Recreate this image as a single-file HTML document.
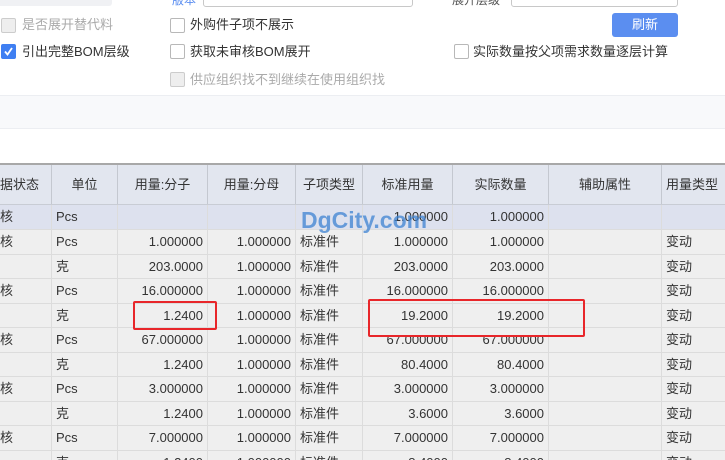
<!DOCTYPE html>
<html style="overflow:hidden;height:460px"><head><meta charset="utf-8"><style>
*{margin:0;padding:0;box-sizing:border-box}
body{width:725px;height:460px;overflow:hidden;background:#fff;position:relative;font-family:"Liberation Sans","Noto Sans CJK SC",sans-serif;font-size:13px;color:#333}
.a{position:absolute}
.cb{position:absolute;width:15px;height:15px;border:1px solid #b8b8b8;border-radius:2px;background:#fff}
.cb.dis{background:#eee;border-color:#ccc}
.lb{position:absolute;font-size:13px;line-height:16px;white-space:nowrap}
.row{position:absolute;left:0;width:725px;height:25px;background:#efefef;border-bottom:1px solid #dcdcdc}
.row.s{height:24px}
.c{position:absolute;top:0;height:100%;border-right:1px solid #dcdcdc;line-height:23px;font-size:13px;white-space:nowrap;padding:0 4px}
.r{text-align:right}
</style></head><body>
<div class="a" style="left:0;top:0;width:112px;height:6px;background:#f0f1f4;border-radius:0 0 3px 0"></div>
<div class="a" style="left:172px;top:-9px;font-size:12px;color:#5b8ef0">版本</div>
<div class="a" style="left:203px;top:-4px;width:210px;height:11px;border:1px solid #c8c8c8;border-radius:3px"></div>
<div class="a" style="left:452px;top:-9px;font-size:12px;color:#555">展开层级</div>
<div class="a" style="left:511px;top:-4px;width:167px;height:11px;border:1px solid #c8c8c8;border-radius:3px"></div>
<div class="a" style="left:612px;top:13px;width:66px;height:24px;background:#5b8ef0;border-radius:3px;color:#fff;text-align:center;line-height:24px;font-size:13px">刷新</div>

<div class="cb dis" style="left:1px;top:18px"></div><div class="lb" style="left:22px;top:17px;color:#aaa">是否展开替代料</div>
<div class="cb" style="left:170px;top:18px"></div><div class="lb" style="left:190px;top:17px">外购件子项不展示</div>
<div class="cb" style="left:1px;top:44px;background:#3f7ff2;border-color:#3f7ff2"><svg width="13" height="13" viewBox="0 0 13 13" style="position:absolute;left:0;top:0"><path d="M3 6.5l2.5 3L10 3" stroke="#fff" stroke-width="1.8" fill="none"/></svg></div><div class="lb" style="left:22px;top:44px">引出完整BOM层级</div>
<div class="cb" style="left:170px;top:44px"></div><div class="lb" style="left:190px;top:44px">获取未审核BOM展开</div>
<div class="cb" style="left:454px;top:44px"></div><div class="lb" style="left:473px;top:44px">实际数量按父项需求数量逐层计算</div>
<div class="cb dis" style="left:170px;top:72px"></div><div class="lb" style="left:190px;top:72px;color:#aaa">供应组织找不到继续在使用组织找</div>

<div class="a" style="left:0;top:95px;width:725px;height:34px;background:#f8f9fb;border-top:1px solid #eceef2;border-bottom:1px solid #eceef2"></div>
<div class="a" style="left:0;top:163px;width:725px;height:2px;background:#a8a8a8"></div>

<div class="a" style="left:0;top:165px;width:725px;height:40px;background:#e2e6ef;border-bottom:1px solid #c8ccd4">
<div class="c" style="left:-4px;width:56px;line-height:40px;border-color:#c4c8d0">据状态</div>
<div class="c" style="left:52px;width:66px;line-height:40px;text-align:center;border-color:#c4c8d0">单位</div>
<div class="c" style="left:118px;width:90px;line-height:40px;text-align:center;border-color:#c4c8d0">用量:分子</div>
<div class="c" style="left:208px;width:88px;line-height:40px;text-align:center;border-color:#c4c8d0">用量:分母</div>
<div class="c" style="left:296px;width:67px;line-height:40px;text-align:center;border-color:#c4c8d0">子项类型</div>
<div class="c" style="left:363px;width:90px;line-height:40px;text-align:center;border-color:#c4c8d0">标准用量</div>
<div class="c" style="left:453px;width:96px;line-height:40px;text-align:center;border-color:#c4c8d0">实际数量</div>
<div class="c" style="left:549px;width:113px;line-height:40px;text-align:center;border-color:#c4c8d0">辅助属性</div>
<div class="c" style="left:662px;width:70px;line-height:40px;border-color:#c4c8d0">用量类型</div>
</div>

<div class="row" style="top:205px;background:#dde1ee"><div class="c" style="left:-4px;width:56px">核</div><div class="c" style="left:52px;width:66px">Pcs</div><div class="c" style="left:118px;width:90px"></div><div class="c" style="left:208px;width:88px"></div><div class="c" style="left:296px;width:67px"></div><div class="c r" style="left:363px;width:90px">1.000000</div><div class="c r" style="left:453px;width:96px">1.000000</div><div class="c" style="left:549px;width:113px"></div></div>
<div class="row" style="top:230px"><div class="c" style="left:-4px;width:56px">核</div><div class="c" style="left:52px;width:66px">Pcs</div><div class="c r" style="left:118px;width:90px">1.000000</div><div class="c r" style="left:208px;width:88px">1.000000</div><div class="c" style="left:296px;width:67px">标准件</div><div class="c r" style="left:363px;width:90px">1.000000</div><div class="c r" style="left:453px;width:96px">1.000000</div><div class="c" style="left:549px;width:113px"></div><div class="c" style="left:662px;width:70px">变动</div></div>
<div class="row s" style="top:255px"><div class="c" style="left:-4px;width:56px"></div><div class="c" style="left:52px;width:66px">克</div><div class="c r" style="left:118px;width:90px">203.0000</div><div class="c r" style="left:208px;width:88px">1.000000</div><div class="c" style="left:296px;width:67px">标准件</div><div class="c r" style="left:363px;width:90px">203.0000</div><div class="c r" style="left:453px;width:96px">203.0000</div><div class="c" style="left:549px;width:113px"></div><div class="c" style="left:662px;width:70px">变动</div></div>
<div class="row" style="top:279px"><div class="c" style="left:-4px;width:56px">核</div><div class="c" style="left:52px;width:66px">Pcs</div><div class="c r" style="left:118px;width:90px">16.000000</div><div class="c r" style="left:208px;width:88px">1.000000</div><div class="c" style="left:296px;width:67px">标准件</div><div class="c r" style="left:363px;width:90px">16.000000</div><div class="c r" style="left:453px;width:96px">16.000000</div><div class="c" style="left:549px;width:113px"></div><div class="c" style="left:662px;width:70px">变动</div></div>
<div class="row s" style="top:304px"><div class="c" style="left:-4px;width:56px"></div><div class="c" style="left:52px;width:66px">克</div><div class="c r" style="left:118px;width:90px">1.2400</div><div class="c r" style="left:208px;width:88px">1.000000</div><div class="c" style="left:296px;width:67px">标准件</div><div class="c r" style="left:363px;width:90px">19.2000</div><div class="c r" style="left:453px;width:96px">19.2000</div><div class="c" style="left:549px;width:113px"></div><div class="c" style="left:662px;width:70px">变动</div></div>
<div class="row" style="top:328px"><div class="c" style="left:-4px;width:56px">核</div><div class="c" style="left:52px;width:66px">Pcs</div><div class="c r" style="left:118px;width:90px">67.000000</div><div class="c r" style="left:208px;width:88px">1.000000</div><div class="c" style="left:296px;width:67px">标准件</div><div class="c r" style="left:363px;width:90px">67.000000</div><div class="c r" style="left:453px;width:96px">67.000000</div><div class="c" style="left:549px;width:113px"></div><div class="c" style="left:662px;width:70px">变动</div></div>
<div class="row s" style="top:353px"><div class="c" style="left:-4px;width:56px"></div><div class="c" style="left:52px;width:66px">克</div><div class="c r" style="left:118px;width:90px">1.2400</div><div class="c r" style="left:208px;width:88px">1.000000</div><div class="c" style="left:296px;width:67px">标准件</div><div class="c r" style="left:363px;width:90px">80.4000</div><div class="c r" style="left:453px;width:96px">80.4000</div><div class="c" style="left:549px;width:113px"></div><div class="c" style="left:662px;width:70px">变动</div></div>
<div class="row" style="top:377px"><div class="c" style="left:-4px;width:56px">核</div><div class="c" style="left:52px;width:66px">Pcs</div><div class="c r" style="left:118px;width:90px">3.000000</div><div class="c r" style="left:208px;width:88px">1.000000</div><div class="c" style="left:296px;width:67px">标准件</div><div class="c r" style="left:363px;width:90px">3.000000</div><div class="c r" style="left:453px;width:96px">3.000000</div><div class="c" style="left:549px;width:113px"></div><div class="c" style="left:662px;width:70px">变动</div></div>
<div class="row s" style="top:402px"><div class="c" style="left:-4px;width:56px"></div><div class="c" style="left:52px;width:66px">克</div><div class="c r" style="left:118px;width:90px">1.2400</div><div class="c r" style="left:208px;width:88px">1.000000</div><div class="c" style="left:296px;width:67px">标准件</div><div class="c r" style="left:363px;width:90px">3.6000</div><div class="c r" style="left:453px;width:96px">3.6000</div><div class="c" style="left:549px;width:113px"></div><div class="c" style="left:662px;width:70px">变动</div></div>
<div class="row" style="top:426px"><div class="c" style="left:-4px;width:56px">核</div><div class="c" style="left:52px;width:66px">Pcs</div><div class="c r" style="left:118px;width:90px">7.000000</div><div class="c r" style="left:208px;width:88px">1.000000</div><div class="c" style="left:296px;width:67px">标准件</div><div class="c r" style="left:363px;width:90px">7.000000</div><div class="c r" style="left:453px;width:96px">7.000000</div><div class="c" style="left:549px;width:113px"></div><div class="c" style="left:662px;width:70px">变动</div></div>
<div class="row" style="top:451px;height:9px;border-bottom:none;overflow:hidden"><div class="c" style="left:-4px;width:56px;height:24px"></div><div class="c" style="left:52px;width:66px;height:24px">克</div><div class="c r" style="left:118px;width:90px;height:24px">1.2400</div><div class="c r" style="left:208px;width:88px;height:24px">1.000000</div><div class="c" style="left:296px;width:67px;height:24px">标准件</div><div class="c r" style="left:363px;width:90px;height:24px">8.4000</div><div class="c r" style="left:453px;width:96px;height:24px">8.4000</div><div class="c" style="left:549px;width:113px;height:24px"></div><div class="c" style="left:662px;width:70px;height:24px">变动</div></div>

<div class="a" style="left:301px;top:207px;font-size:23px;font-weight:bold;color:rgba(60,130,210,0.75)">DgCity.com</div>
<div class="a" style="left:133px;top:301px;width:84px;height:29px;border:2px solid #e8262a;border-radius:2px"></div>
<div class="a" style="left:368px;top:299px;width:217px;height:38px;border:2px solid #e8262a;border-radius:2px"></div>
</body></html>
